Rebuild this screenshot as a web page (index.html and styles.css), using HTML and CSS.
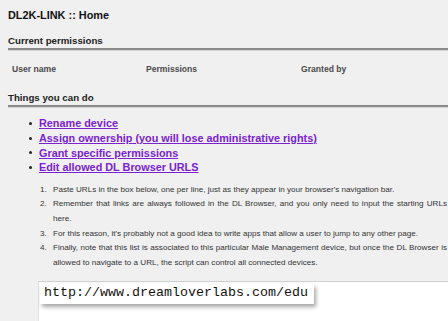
FILE: index.html
```html
<!DOCTYPE html>
<html lang="en">
<head>
  <meta charset="UTF-8">
  <meta name="viewport" content="width=device-width, initial-scale=1.0">
  <title>DL2K-LINK :: Home</title>
  <link rel="stylesheet" href="styles.css">
</head>
<body>
  <h1 class="title">DL2K-LINK :: Home</h1>

  <h2 class="section">Current permissions</h2>
  <div class="perm-head">
    <span>User name</span>
    <span>Permissions</span>
    <span>Granted by</span>
  </div>

  <h2 class="section">Things you can do</h2>
  <ul class="actions">
    <li><a href="#">Rename device</a></li>
    <li><a href="#">Assign ownership (you will lose administrative rights)</a></li>
    <li><a href="#">Grant specific permissions</a></li>
    <li><a href="#">Edit allowed DL Browser URLS</a></li>
  </ul>

  <ol class="notes">
    <li><span>Paste URLs in the box below, one per line, just as they appear in your browser's navigation bar.</span></li>
    <li><span>Remember that links are always followed in the DL Browser, and you only need to input the starting URLs here.</span></li>
    <li><span>For this reason, it's probably not a good idea to write apps that allow a user to jump to any other page.</span></li>
    <li><span>Finally, note that this list is associated to this particular Male Management device, but once the DL Browser is allowed to navigate to a URL, the script can control all connected devices.</span></li>
  </ol>

  <div class="url-box">
    <span class="url-line">http://www.dreamloverlabs.com/edu</span>
  </div>
</body>
</html>
```

FILE: styles.css
```css
html, body {
  height: 100%;
}
body {
  display: flex;
  flex-direction: column;
  box-sizing: border-box;
  margin: 0;
  padding: 0 0 0 8px;
  background: #f0f0f0;
  font-family: "Liberation Sans", Arial, sans-serif;
  color: #222;
  overflow: hidden;
}
.title {
  margin: 0;
  padding-top: 9px;
  font-size: 10.9px;
  line-height: 13px;
  font-weight: bold;
  color: #111;
}
.section {
  margin: 13px 0 0;
  padding-bottom: 1px;
  font-size: 9.7px;
  line-height: 12px;
  font-weight: bold;
  color: #222;
  border-bottom: 2px solid #8a8a8a;
  box-shadow: 0 1px 0 #d4d4d4;
}
.perm-head {
  display: grid;
  grid-template-columns: 134px 155px 1fr;
  margin: 14px 0 17px;
  padding-left: 4px;
  font-size: 8.6px;
  line-height: 11px;
  font-weight: bold;
  color: #4a4a4a;
}
.perm-head + .section {
  margin-top: 0;
}
.actions {
  list-style: none;
  margin: 9px 0 0;
  padding-left: 21px;
  font-size: 10.85px;
  line-height: 14.8px;
  font-weight: bold;
}
.actions li {
  display: flex;
  align-items: center;
}
.actions li::before {
  content: "";
  width: 3px;
  height: 3px;
  border-radius: 50%;
  background: #222;
  margin-right: 7px;
  flex: none;
}
.actions a {
  color: #7a22cf;
  text-decoration: underline;
}
.notes {
  list-style: none;
  counter-reset: note;
  margin: 7.6px 1px 0 0;
  padding-left: 32px;
  font-size: 8.1px;
  line-height: 14.65px;
  color: #333;
}
.notes li {
  counter-increment: note;
  display: grid;
  grid-template-columns: 13px 1fr;
  text-align: justify;
}
.notes li::before {
  content: counter(note) ".";
}
.url-box {
  flex: 1;
  margin: 10px 0 0 30px;
  background: #fff;
  border-top: 1px solid #cfcfcf;
  border-left: 1px solid #e0e0e0;
}
.url-line {
  display: inline-block;
  margin-left: 1px;
  padding: 1px 6px 4px 4px;
  font-family: "Liberation Mono", "Courier New", monospace;
  font-size: 13.33px;
  line-height: 15px;
  color: #111;
  background: #fff;
  box-shadow: 2px 3px 4px rgba(0, 0, 0, 0.35);
}
```
